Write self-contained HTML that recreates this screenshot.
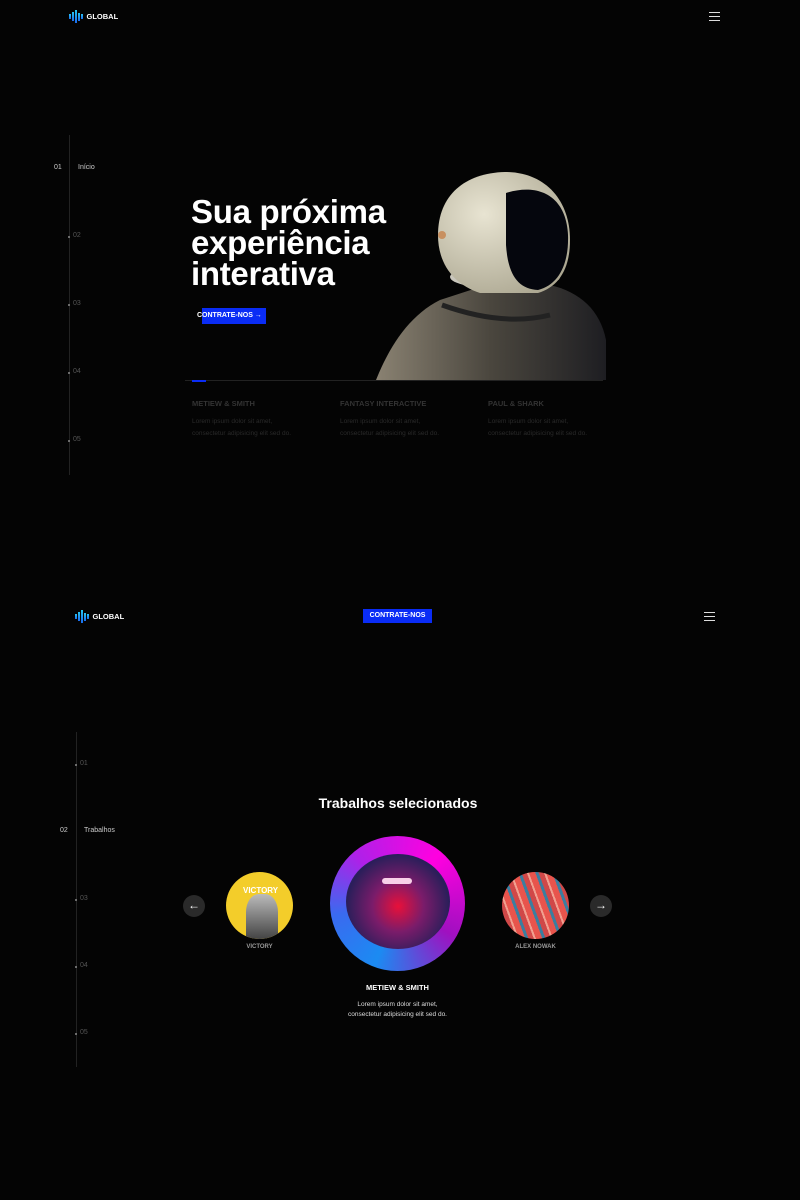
<!DOCTYPE html>
<html><head><meta charset="utf-8"><style>
*{margin:0;padding:0;box-sizing:border-box}
body{width:800px;height:1200px;background:#040404;font-family:"Liberation Sans",sans-serif;color:#fff;position:relative;overflow:hidden}
.a{position:absolute}
.logo{font-size:7.5px;font-weight:bold;letter-spacing:0;display:flex;align-items:center;gap:4px}
.bars{display:flex;align-items:center;gap:1.5px}
.bars i{display:block;width:1.5px;background:linear-gradient(#27c4f0,#1a6cf0)}
.ham{width:11px}
.ham i{display:block;height:1px;background:#ddd;margin-bottom:3px}
.tl{font-size:7px;color:#555}
.dot{width:2px;height:2px;background:#888;border-radius:50%}
.btn{background:#0a2cf5;color:#fff;font-size:7px;font-weight:bold}
.gray{color:#333;font-size:7.5px;font-weight:bold}
.lor{color:#2a2a2a;font-size:6.5px;line-height:12px}
.circ{border-radius:50%;overflow:hidden}
.arrow{width:22px;height:22px;border-radius:50%;background:#2a2a2a;color:#fff;font-size:12px;text-align:center;line-height:21px}
</style></head><body>
<div class="a logo" style="left:69px;top:10px"><div class="bars"><i style="height:5px"></i><i style="height:9px"></i><i style="height:13px"></i><i style="height:8px"></i><i style="height:5px"></i></div>GLOBAL</div>
<div class="a ham" style="left:709px;top:12px"><i></i><i></i><i></i></div>

<div class="a" style="left:69px;top:135px;width:1px;height:340px;background:#222"></div>
<div class="a" style="left:54px;top:164px;font-size:7px;color:#ccc">01</div>
<div class="a" style="left:78px;top:164px;font-size:7px;color:#ccc">Início</div>
<div class="a dot" style="left:68px;top:236px"></div><div class="a tl" style="left:73px;top:232px">02</div>
<div class="a dot" style="left:68px;top:304px"></div><div class="a tl" style="left:73px;top:300px">03</div>
<div class="a dot" style="left:68px;top:372px"></div><div class="a tl" style="left:73px;top:368px">04</div>
<div class="a dot" style="left:68px;top:440px"></div><div class="a tl" style="left:73px;top:436px">05</div>

<svg class="a" style="left:370px;top:165px" width="240" height="216" viewBox="0 0 240 216">
<defs><radialGradient id="hg" cx="0.35" cy="0.35" r="0.8"><stop offset="0" stop-color="#e8e4d2"/><stop offset="1" stop-color="#a9a48e"/></radialGradient>
<linearGradient id="bg" x1="0" y1="0" x2="1" y2="0"><stop offset="0" stop-color="#8a8272"/><stop offset=".5" stop-color="#4a463e"/><stop offset="1" stop-color="#1e1e22"/></linearGradient></defs>
<path d="M6 215 C20 180 40 150 70 135 L110 122 L180 120 C210 127 230 145 236 175 L236 215 Z" fill="url(#bg)"/>
<path d="M72 140 C100 150 140 160 180 150" stroke="#222" stroke-width="5" fill="none"/>
<ellipse cx="135" cy="112" rx="55" ry="12" fill="#c9c6bc"/>
<path d="M68 70 C68 30 95 8 135 7 C175 7 200 35 200 75 C200 105 188 122 168 128 L110 128 C85 120 68 100 68 70 Z" fill="url(#hg)"/>
<path d="M136 28 C168 18 196 30 198 70 C199 100 188 120 168 125 C148 124 138 110 136 80 Z" fill="#05060d"/>
<circle cx="72" cy="70" r="4" fill="#c89060"/>
</svg>

<div class="a" style="left:191px;top:196px;font-size:33px;font-weight:900;line-height:31px;letter-spacing:-0.3px">Sua próxima<br>experiência<br>interativa</div>
<div class="a btn" style="left:202px;top:308px;width:64px;height:16px"></div>
<div class="a" style="left:197px;top:312px;font-size:7px;font-weight:bold">CONTRATE-NOS →</div>

<div class="a" style="left:185px;top:380px;width:418px;height:1px;background:#222"></div>
<div class="a" style="left:192px;top:380px;width:14px;height:2px;background:#0a2cf5"></div>
<div class="a gray" style="left:192px;top:399px">METIEW &amp; SMITH</div>
<div class="a lor" style="left:192px;top:416px">Lorem ipsum dolor sit amet,<br>consectetur adipisicing elit sed do.</div>
<div class="a gray" style="left:340px;top:399px">FANTASY INTERACTIVE</div>
<div class="a lor" style="left:340px;top:416px">Lorem ipsum dolor sit amet,<br>consectetur adipisicing elit sed do.</div>
<div class="a gray" style="left:488px;top:399px">PAUL &amp; SHARK</div>
<div class="a lor" style="left:488px;top:416px">Lorem ipsum dolor sit amet,<br>consectetur adipisicing elit sed do.</div>

<div class="a logo" style="left:75px;top:610px"><div class="bars"><i style="height:5px"></i><i style="height:9px"></i><i style="height:13px"></i><i style="height:8px"></i><i style="height:5px"></i></div>GLOBAL</div>
<div class="a btn" style="left:363px;top:609px;width:69px;height:14px;text-align:center;line-height:14px">CONTRATE-NOS</div>
<div class="a ham" style="left:704px;top:612px"><i></i><i></i><i></i></div>

<div class="a" style="left:76px;top:732px;width:1px;height:335px;background:#222"></div>
<div class="a dot" style="left:75px;top:764px"></div><div class="a tl" style="left:80px;top:760px">01</div>
<div class="a" style="left:60px;top:827px;font-size:7px;color:#ccc">02</div>
<div class="a" style="left:84px;top:827px;font-size:7px;color:#ccc">Trabalhos</div>
<div class="a dot" style="left:75px;top:899px"></div><div class="a tl" style="left:80px;top:895px">03</div>
<div class="a dot" style="left:75px;top:966px"></div><div class="a tl" style="left:80px;top:962px">04</div>
<div class="a dot" style="left:75px;top:1033px"></div><div class="a tl" style="left:80px;top:1029px">05</div>

<div class="a" style="left:0;width:796px;top:795px;text-align:center;font-size:14px;font-weight:bold">Trabalhos selecionados</div>

<div class="a arrow" style="left:183px;top:895px">←</div>
<div class="a arrow" style="left:590px;top:895px">→</div>

<div class="a circ" style="left:226px;top:872px;width:67px;height:67px;background:#f3cd2a">
<div class="a" style="left:20px;top:22px;width:32px;height:45px;background:linear-gradient(#bbb,#444);border-radius:40% 40% 0 0"></div>
<div class="a" style="left:17px;top:14px;font-size:8px;font-weight:bold;color:#fff">VICTORY</div></div>
<div class="a" style="left:226px;top:944px;width:67px;text-align:center;font-size:6px;color:#999;font-weight:bold">VICTORY</div>

<div class="a circ" style="left:330px;top:836px;width:135px;height:135px;background:conic-gradient(from 200deg,#1b8bf2 0deg,#3a6af0 60deg,#b020e8 120deg,#ff00e0 200deg,#a010c0 280deg,#1b8bf2 360deg)">
<div class="a circ" style="left:16px;top:18px;width:104px;height:95px;background:radial-gradient(ellipse at 50% 55%,#e8103a 0,#7a1c6a 35%,#2a1e5a 70%,#4040a0 100%)"></div>
<div class="a" style="left:52px;top:42px;width:30px;height:6px;border-radius:3px;background:#f8d0e8"></div></div>
<div class="a" style="left:330px;top:983px;width:135px;text-align:center;font-size:7.5px;font-weight:bold">METIEW &amp; SMITH</div>
<div class="a" style="left:300px;top:1000px;width:195px;text-align:center;font-size:6.5px;line-height:10px;color:#ddd">Lorem ipsum dolor sit amet,<br>consectetur adipisicing elit sed do.</div>

<div class="a circ" style="left:502px;top:872px;width:67px;height:67px;background:repeating-linear-gradient(70deg,#e8544c 0 6px,#3a7ea0 6px 9px,#d04848 9px 14px,#f0a090 14px 16px)"></div>
<div class="a" style="left:502px;top:944px;width:67px;text-align:center;font-size:6px;color:#999;font-weight:bold">ALEX NOWAK</div>
</body></html>
